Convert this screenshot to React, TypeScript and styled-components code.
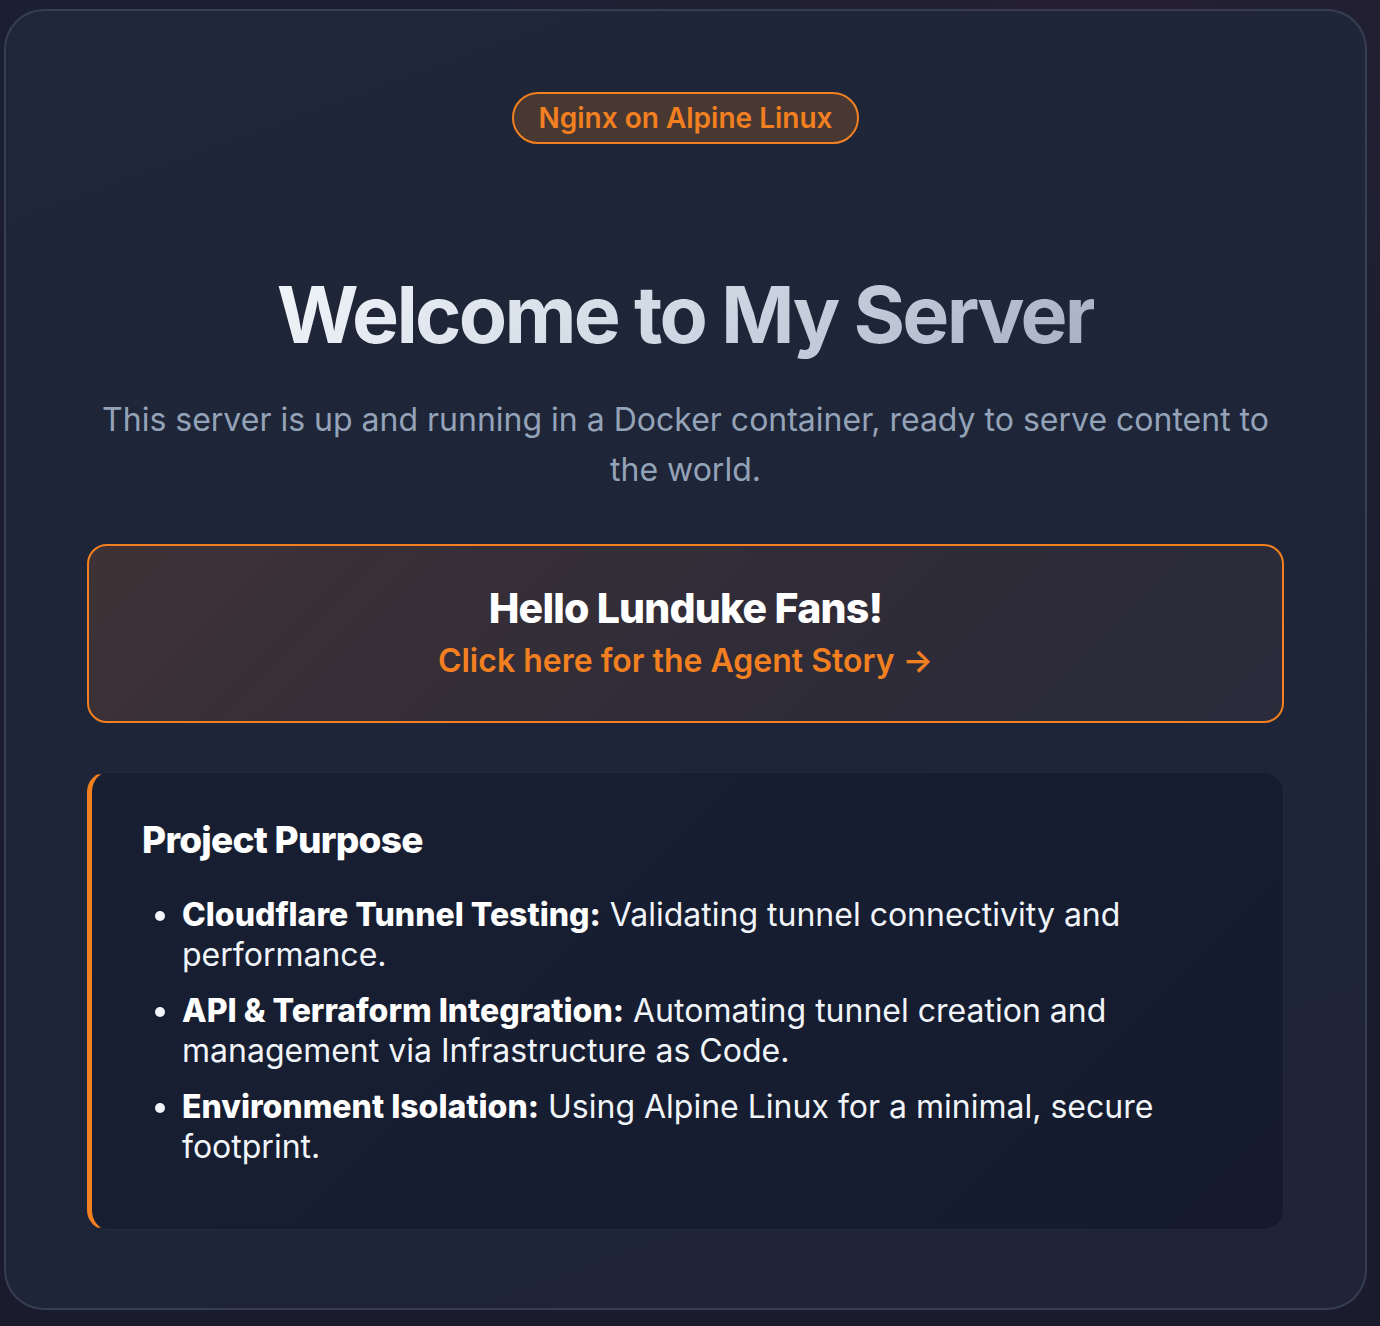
import React from 'react';
import styled, { createGlobalStyle } from 'styled-components';

const ORANGE = '#f38020';

const GlobalStyle = createGlobalStyle`
  html, body {
    margin: 0;
    padding: 0;
  }

  body {
    min-height: 1326px;
    background: radial-gradient(circle at 80% 0%, #251f33 0%, rgba(37, 31, 51, 0) 45%),
      linear-gradient(180deg, #1b1f32 0%, #1a1b2c 100%);
    font-family: Inter, 'Noto Sans', sans-serif;
    color: #f1f5f9;
  }
`;

const Page = styled.div`
  display: flex;
  padding: 9px 13px 16px 4px;
`;

const Container = styled.main`
  flex: 1;
  display: flex;
  flex-direction: column;
  align-items: center;
  padding: 81px 81px 78px;
  border: 2px solid rgba(148, 163, 184, 0.2);
  border-radius: 40px;
  background: linear-gradient(160deg, #1f2638 0%, #1e2538 60%, #1f2436 100%);
`;

const Badge = styled.div`
  padding: 9px 24px;
  border: 2px solid ${ORANGE};
  border-radius: 999px;
  background: rgba(243, 128, 32, 0.2);
  color: ${ORANGE};
  font-size: 28px;
  font-weight: 600;
  line-height: 30px;
`;

const Title = styled.h1`
  margin: 122px 0 0;
  font-size: 79px;
  font-weight: 700;
  line-height: 96px;
  letter-spacing: -0.035em;
  background: linear-gradient(135deg, #f1f5f9 0%, #cbd5e1 55%, #a6b0c3 100%);
  -webkit-background-clip: text;
  background-clip: text;
  color: transparent;
`;

const Subtitle = styled.p`
  margin: 33px 0 0;
  text-align: center;
  color: #94a3b8;
  font-size: 32px;
  line-height: 50px;
`;

const Highlight = styled.a`
  align-self: stretch;
  display: flex;
  flex-direction: column;
  align-items: center;
  gap: 5px;
  margin-top: 49px;
  padding: 38px 40px 36px;
  border: 2px solid ${ORANGE};
  border-radius: 20px;
  background: linear-gradient(135deg, #3e3236 0%, #302c38 55%, #2a2b3b 100%);
  text-decoration: none;
`;

const HighlightTitle = styled.h2`
  margin: 0;
  color: #ffffff;
  font-size: 41px;
  font-weight: 800;
  line-height: 48px;
  letter-spacing: -0.02em;
`;

const HighlightLink = styled.span`
  color: ${ORANGE};
  font-size: 32px;
  font-weight: 600;
  line-height: 48px;
`;

const Purpose = styled.section`
  align-self: stretch;
  margin-top: 49px;
  padding: 45px 48px 62px 50px;
  border: 1px solid rgba(148, 163, 184, 0.08);
  border-left: 5px solid ${ORANGE};
  border-radius: 20px;
  background: linear-gradient(135deg, #181f32 0%, #161d30 60%, #151b2d 100%);
`;

const PurposeTitle = styled.h3`
  margin: 0;
  color: #ffffff;
  font-size: 37px;
  font-weight: 800;
  line-height: 43px;
  letter-spacing: -0.02em;
`;

const List = styled.ul`
  margin: 34px 0 0;
  padding-left: 40px;
`;

const Item = styled.li`
  margin-bottom: 16px;
  color: #f1f5f9;
  font-size: 32px;
  line-height: 40px;

  &:last-child {
    margin-bottom: 0;
  }

  strong {
    font-weight: 800;
    color: #ffffff;
  }
`;

const items = [
  {
    label: 'Cloudflare Tunnel Testing:',
    text: 'Validating tunnel connectivity and performance.',
  },
  {
    label: 'API & Terraform Integration:',
    text: 'Automating tunnel creation and management via Infrastructure as Code.',
  },
  {
    label: 'Environment Isolation:',
    text: 'Using Alpine Linux for a minimal, secure footprint.',
  },
];

const App = () => (
  <>
    <GlobalStyle />
    <Page>
      <Container>
        <Badge>Nginx on Alpine Linux</Badge>
        <Title>Welcome to My Server</Title>
        <Subtitle>
          This server is up and running in a Docker container, ready to serve
          content to the world.
        </Subtitle>
        <Highlight href="#">
          <HighlightTitle>Hello Lunduke Fans!</HighlightTitle>
          <HighlightLink>Click here for the Agent Story →</HighlightLink>
        </Highlight>
        <Purpose>
          <PurposeTitle>Project Purpose</PurposeTitle>
          <List>
            {items.map((item) => (
              <Item key={item.label}>
                <strong>{item.label}</strong> {item.text}
              </Item>
            ))}
          </List>
        </Purpose>
      </Container>
    </Page>
  </>
);

export default App;
